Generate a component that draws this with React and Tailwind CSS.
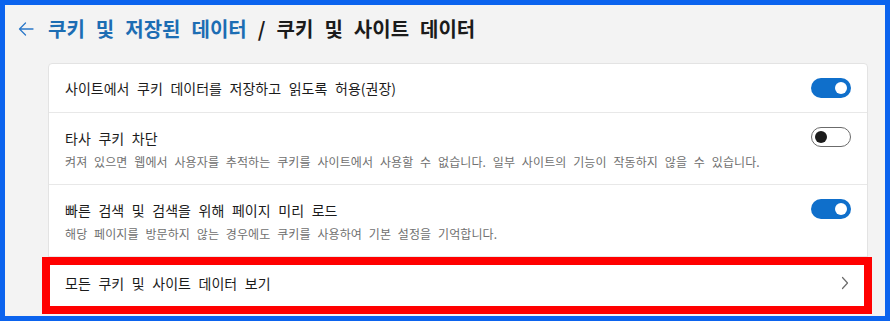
const font = { fontFamily: '"Noto Sans CJK KR", "Noto Sans", sans-serif' };

function Toggle({ on }) {
  if (on) {
    return (
      <div className="flex h-[20px] w-[40px] shrink-0 items-center justify-end rounded-full bg-[#0f6fcb] pr-[4px]">
        <span className="h-[12px] w-[12px] rounded-full bg-white" />
      </div>
    );
  }
  return (
    <div className="flex h-[20px] w-[40px] shrink-0 items-center rounded-full border border-[#6b6b6b] bg-white pl-[3px]">
      <span className="h-[12px] w-[12px] rounded-full bg-[#1b1b1b]" />
    </div>
  );
}

function SettingRow({ title, desc, on, last }) {
  return (
    <div className={`flex items-center justify-between px-4 ${desc ? 'h-[72px]' : 'h-[49px]'} ${last ? '' : 'border-b border-[#e8e8e8]'}`}>
      <div className="flex flex-col">
        <span className="text-[14px] leading-[20px] text-[#1b1b1b] [word-spacing:4.5px]">{title}</span>
        {desc && (
          <span className="mt-[6px] text-[12px] leading-[16px] tracking-[0.1px] text-[#707070] [word-spacing:4px]">{desc}</span>
        )}
      </div>
      <div className={desc ? 'self-start pt-[14px]' : ''}>
        <Toggle on={on} />
      </div>
    </div>
  );
}

export default function App() {
  return (
    <div style={font} className="relative h-[321px] w-[890px] overflow-hidden border-[5px] border-[#0b63ee] bg-[#f3f3f3]">
      <header className="flex h-[48px] items-center pl-[13px]">
        <svg width="16" height="14" viewBox="0 0 16 14" fill="none" stroke="#2b78c9" strokeWidth="1.3" strokeLinecap="round" strokeLinejoin="round">
          <path d="M15 7H1.5M7.5 1L1.5 7l6 6" />
        </svg>
        <h1 className="ml-[14px] text-[20px] font-bold leading-[28px] text-[#1b1b1b] [word-spacing:6.5px]">
          <span className="text-[#1c6db3]">쿠키 및 저장된 데이터</span> / 쿠키 및 사이트 데이터
        </h1>
      </header>
      <div className="ml-[43px] mr-[17px] mt-[10px] rounded-t-[4px] border border-[#e3e3e3] bg-white">
        <SettingRow title="사이트에서 쿠키 데이터를 저장하고 읽도록 허용(권장)" on />
        <SettingRow
          title="타사 쿠키 차단"
          desc="켜져 있으면 웹에서 사용자를 추적하는 쿠키를 사이트에서 사용할 수 없습니다. 일부 사이트의 기능이 작동하지 않을 수 있습니다."
          on={false}
        />
        <SettingRow
          title="빠른 검색 및 검색을 위해 페이지 미리 로드"
          desc="해당 페이지를 방문하지 않는 경우에도 쿠키를 사용하여 기본 설정을 기억합니다."
          on
        />
        <div className="flex h-[52px] items-center justify-between px-4">
          <span className="text-[14px] leading-[20px] text-[#1b1b1b] [word-spacing:4.5px]">모든 쿠키 및 사이트 데이터 보기</span>
          <svg width="8" height="14" viewBox="0 0 8 14" fill="none" stroke="#6b6b6b" strokeWidth="1.2" strokeLinecap="round" strokeLinejoin="round" className="mr-[2px]">
            <path d="M1.5 1.5L6.5 7l-5 5.5" />
          </svg>
        </div>
      </div>
      <div className="absolute left-[37px] top-[252px] h-[57px] w-[830px] border-[8px] border-[#ff0000]" />
    </div>
  );
}
